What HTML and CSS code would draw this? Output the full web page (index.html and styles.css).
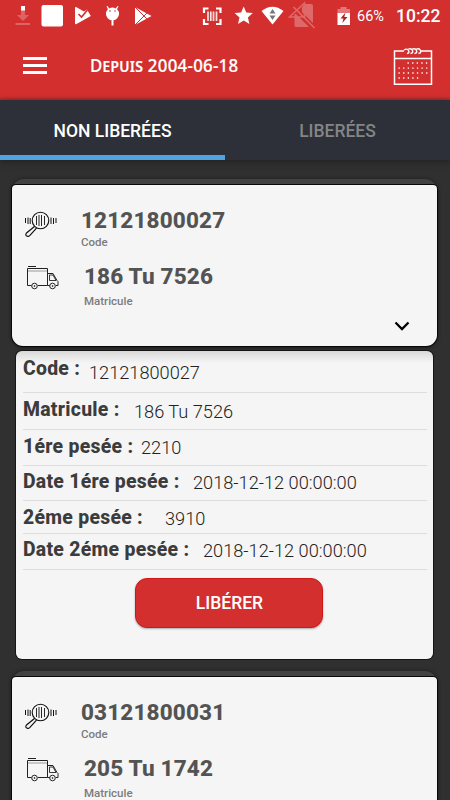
FILE: index.html
```html
<!DOCTYPE html>
<html lang="fr">
<head>
<meta charset="utf-8">
<title>Pesées</title>
<link rel="stylesheet" href="styles.css">
</head>
<body>
<svg class="defs" width="0" height="0">
  <symbol id="scan" viewBox="0 0 34 27">
    <g fill="none" stroke="#111">
      <path d="M1.500 8v5M4 7.500v6.500M6.200 8v6M27 7.500v6.500M29.500 8v6M32 8v5" stroke-width="1"/>
      <circle cx="16.500" cy="10.500" r="8.300" stroke-width="1.100"/>
      <path d="M12.500 6v9M15 5v11M17.500 5v11M20.500 6v9" stroke-width=".9"/>
      <path d="M10.500 16.500l-8 6.500q-1.500 2 .2 3t3-.3l6.800-7.600" stroke-width="1.200"/>
    </g>
  </symbol>
  <symbol id="truck" viewBox="0 0 34 26">
    <g fill="none" stroke="#222">
      <path d="M2 1.500h8" stroke-width="1"/>
      <path d="M5.500 20.500H1.500V3.500h20v17H12M21.500 8.500h5.500l4 7 1 1V20.500h-2M21.500 20.500H24" stroke-width="1"/>
      <path d="M2 6h19" stroke="#999"/>
      <path d="M23.500 10h3.500l3 5.500h-6.500z" stroke-width=".9"/>
      <circle cx="8.500" cy="21" r="2.800" fill="#f5f5f5" stroke-width="1"/>
      <circle cx="26.500" cy="21" r="2.800" fill="#f5f5f5" stroke-width="1"/>
      <circle cx="8.500" cy="21" r=".5"/><circle cx="26.500" cy="21" r=".5"/>
    </g>
  </symbol>
</svg>
<header class="top">
  <div class="status">
    <svg class="left-icons" width="170" height="32" viewBox="0 0 170 32">
      <g fill="#fff">
        <g opacity=".25"><path d="M21 10h4v5h4l-6 6-6-6h4zM15.500 23h14.500v2H15.500z"/></g>
        <rect x="21" y="6" width="4" height="4.500"/>
        <rect x="41.500" y="5" width="21.500" height="21.500" rx="2"/>
        <path d="M75 8q0-1.500 1.500-.7L84 11.500l3-2 3.800 6.500L76.500 24q-1.500.8-1.500-.7z"/>
        <path d="M106 12.500a6.500 6 0 0 1 2-3.200l-1.500-2.800 1-.5 1.800 2.400a7 7 0 0 1 6.400 0L117.500 6l1 .5L117 9.300a6.500 6 0 0 1 2 3.200zM106 14h13a6.500 6.500 0 0 1-13 0zM111.500 20h2v5.500h-2z"/>
        <path d="M106 12h13v2.500h-13z"/>
        <path d="M135 7l16.500 9L135 25z"/>
      </g>
      <g fill="none" stroke="#d32f2f"><path d="M78.500 14l3 3 6-7" stroke-width="1.600"/><path d="M135 7l12 12M135 25l12-12"/></g>
      <g fill="#d32f2f"><circle cx="110" cy="11" r=".8"/><circle cx="115" cy="11" r=".8"/></g>
    </svg>
    <svg class="right-icons" width="155" height="32" viewBox="200 0 155 32">
      <g fill="none" stroke="#fff">
        <path d="M208.500 8.500h-4.500v4.500M216 8.500h4.500v4.500M204 19v5h4.500M220.500 19v5H216" stroke-width="2.200"/>
        <path d="M208 11.500v9.500M210.800 11.500v9.500M213.500 11.500v9.500M216.500 11.500v9.500" stroke-width="1.700" opacity=".85"/>
      </g>
      <path fill="#fff" d="M243.700 6.500l2.600 6 6.500.6-4.900 4.300 1.500 6.600-5.700-3.500L238 24l1.500-6.600-4.900-4.300 6.500-.6z"/>
      <path fill="#fff" d="M261.500 11q11-8.500 22 0l-11 13.500z"/>
      <path fill="#777" d="M272.500 9l3 4.500h-6zM272.500 20l3-4.500h-6z"/>
      <g opacity=".28"><path fill="#fff" d="M302 7l3-3h6q2 0 2 2v17l-11-11zM294.500 14v11.500q0 1.500 1.500 1.500h13L296 14z"/><path d="M289.500 17L304.500 3v14zM293.500 7l21 21" stroke="#fff" stroke-width="1.600" fill="none"/></g>
      <path fill="#fff" opacity=".35" d="M337.500 9h3V7h6v2h3.500v5h-12.500z"/>
      <path fill="#fff" d="M337.500 13h12.500v12h-12.500z"/>
      <path fill="#b71c1c" d="M345.500 12.500l-5 6h3l-1.200 4.500 5.200-6h-3.200z"/>
    </svg>
    <span class="battery">66%</span>
    <span class="clock">10:22</span>
  </div>
  <div class="appbar">
    <div class="menu"><i></i><i></i><i></i></div>
    <h1>Depuis 2004-06-18</h1>
    <svg class="calendar" width="40" height="40" viewBox="0 0 40 40">
      <g fill="none" stroke="#fff">
        <path d="M11 4H1.500V37.200h37V4H28" stroke-width="1.500"/>
        <path d="M1 11.500h38" stroke-width="1.500"/>
        <path d="M11 3q3-2 4.500.5T14 6.500M15.500 2q3-1 4 1.500T17.500 6.500M19.500 2q3-1 4 1.500T21.500 6.500M23.500 2q3-1 4 1.500T25.500 6.500" stroke-width="1.400"/>
        <g stroke-width="1.300" stroke-dasharray="1.300 3.300"><path d="M14.500 16h21M5.500 21.200h30M5.500 26h30M5.500 31h21"/></g>
      </g>
    </svg>
  </div>
</header>
<nav class="tabs">
  <div class="tab active">NON LIBERÉES</div>
  <div class="tab">LIBERÉES</div>
</nav>
<main>
  <section class="shell">
    <div class="card">
      <div class="item"><svg class="scan" width="34" height="27"><use href="#scan"/></svg><div><strong>12121800027</strong><small>Code</small></div></div>
      <div class="item second"><svg class="truck" width="34" height="26"><use href="#truck"/></svg><div><strong>186 Tu 7526</strong><small>Matricule</small></div></div>
      <svg class="chevron" width="16" height="10" viewBox="0 0 16 10"><path d="M1.500 1.500L8 8l6.500-6.500" fill="none" stroke="#000" stroke-width="2.300"/></svg>
    </div>
  </section>
  <section class="details">
    <div class="row r1"><b>Code :</b><span>12121800027</span></div>
    <div class="row r2"><b>Matricule :</b><span>186 Tu 7526</span></div>
    <div class="row r3"><b>1ére pesée :</b><span>2210</span></div>
    <div class="row r4"><b>Date 1ére pesée :</b><span>2018-12-12 00:00:00</span></div>
    <div class="row r5"><b>2éme pesée :</b><span>3910</span></div>
    <div class="row r6"><b>Date 2éme pesée :</b><span>2018-12-12 00:00:00</span></div>
    <button>LIBÉRER</button>
  </section>
  <section class="shell next">
    <div class="card">
      <div class="item"><svg class="scan" width="34" height="27"><use href="#scan"/></svg><div><strong>03121800031</strong><small>Code</small></div></div>
      <div class="item second"><svg class="truck" width="34" height="26"><use href="#truck"/></svg><div><strong>205 Tu 1742</strong><small>Matricule</small></div></div>
    </div>
  </section>
</main>
</body>
</html>
```
FILE: styles.css
```css
* { box-sizing: border-box; }
body {
  margin: 0;
  width: 450px;
  height: 800px;
  overflow: hidden;
  background: #303030;
  font-family: Roboto, sans-serif;
}
svg { display: block; flex: none; }
.defs { position: absolute; }
.top { height: 100px; background: linear-gradient(#d32f2f 96px, #b52a2a); color: #fff; }
.status { display: flex; height: 32px; }
.right-icons { margin-left: 30px; }
.battery { width: 41px; padding-left: 2px; font-size: 14.500px; line-height: 33px; }
.clock { font-size: 17.500px; font-weight: 500; line-height: 33px; }
.appbar { display: flex; height: 68px; }
.menu { width: 24px; margin: 25px 0 0 23px; }
.menu i { display: block; height: 3px; margin-bottom: 4px; background: #fff; }
h1 {
  width: 302px;
  margin: 21px 0 0 43px;
  font: 500 18.500px/24px "Noto Sans", sans-serif;
  font-variant: small-caps;
  letter-spacing: .3px;
  transform: scaleX(.91);
  transform-origin: left;
  white-space: nowrap;
  -webkit-text-stroke: .2px #fff;
}
.calendar { margin: 15px 0 0 1px; }
.tabs { display: flex; height: 60px; background: #2d3039; box-shadow: 0 2px 6px #222; }
.tab {
  width: 225px;
  height: 60px;
  color: #858585;
  font-size: 17.500px;
  font-weight: 500;
  line-height: 62px;
  text-align: center;
}
.active { color: #fff; border-bottom: 5px solid #50a2e0; }
.shell {
  width: 425px;
  height: 167px;
  margin: 19px 0 0 12.400px;
  padding-top: 6px;
  border-radius: 12px;
  background: #424242;
  box-shadow: 0 1px 4px #111;
}
.card {
  height: 161px;
  padding-top: 20px;
  border-radius: 4px 4px 11px 11px;
  background: #f5f5f5;
  box-shadow: 0 0 0 1px #080808;
}
.item { display: flex; height: 56px; }
.item strong {
  display: block;
  color: #535353;
  font-size: 22.500px;
  font-weight: 800;
  letter-spacing: .15px;
  line-height: 30px;
}
.item small {
  display: block;
  color: #7c7c7c;
  font-size: 11.500px;
  font-weight: 500;
  line-height: 15px;
}
.scan { margin: 5px 23px 0 11.600px; }
.truck { margin: 4px 24px 0 13.600px; }
.second small { margin-top: 3px; }
.chevron { margin: 4px 0 0 382px; }
.details {
  width: 417px;
  height: 308px;
  margin: 5px 0 0 16.400px;
  padding: 0 6.600px;
  border-radius: 6px;
  background: linear-gradient(#d9d9d9, #f5f5f5 12px);
  box-shadow: 0 0 0 1px #151515;
}
.row {
  display: flex;
  line-height: 20px;
  border-bottom: 1px solid #ddd;
}
.row b {
  flex: none;
  width: 170px;
  color: #3c3c3c;
  font-size: 19.400px;
  font-weight: 800;
  letter-spacing: .28px;
  white-space: nowrap;
}
.row span { color: #222; font-size: 18.200px; font-weight: 300; padding-top: 1px; }
.r1 { height: 42px; padding-top: 8px; }
.r1 b { width: 66px; }
.r1 span { padding-top: 4px; }
.r2 { height: 37px; padding-top: 7px; }
.r2 b { width: 111px; }
.r2 span { padding-top: 2px; }
.r3 { height: 36px; padding-top: 7px; }
.r3 b { width: 118px; }
.r4 { height: 35px; padding-top: 6px; }
.r5 { height: 33px; padding-top: 7px; }
.r5 b { width: 142px; }
.r6 { height: 36px; padding-top: 6px; }
.r6 b { width: 180px; }
button {
  display: block;
  width: 188px;
  height: 50px;
  margin: 8px 0 0 112.500px;
  padding: 0;
  border: 1px solid #d01717;
  border-radius: 12px;
  background: #d32f2f;
  color: #fff;
  font: 500 17.500px Roboto, sans-serif;
  box-shadow: 0 1px 2px #aaa;
}
.next { margin-top: 12px; }
```
